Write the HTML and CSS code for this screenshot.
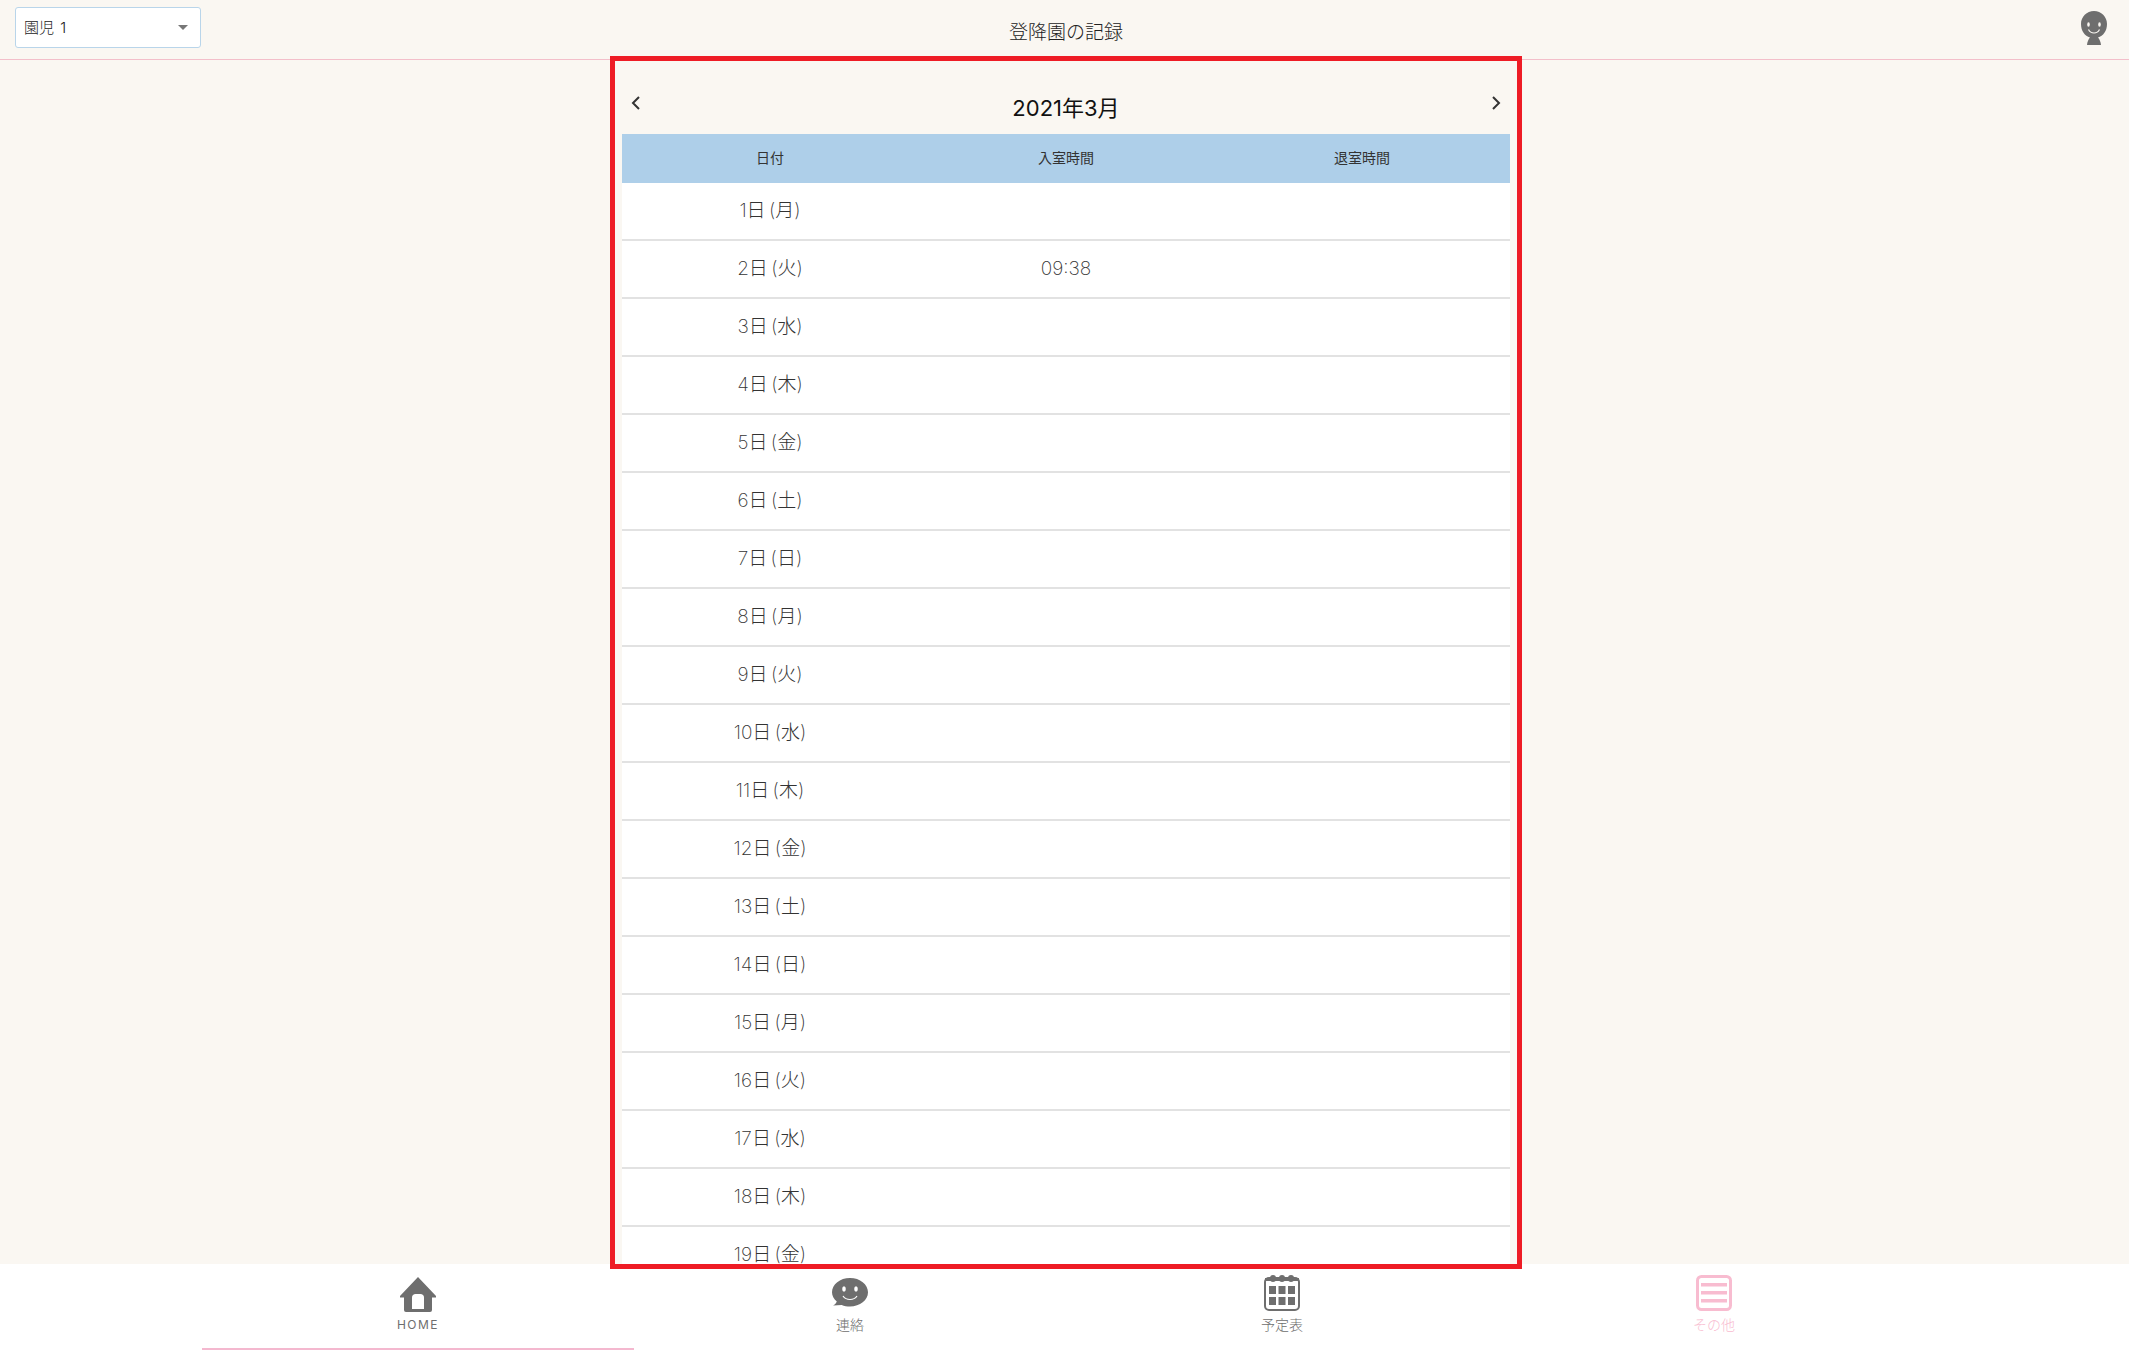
FILE: index.html
```html
<!DOCTYPE html>
<html lang="ja">
<head>
<meta charset="utf-8">
<title>登降園の記録</title>
<link rel="stylesheet" href="styles.css">
</head>
<body>
<header class="topbar">
  <div class="child-select"><span>園児 1</span><i class="caret"></i></div>
  <h1 class="page-title">登降園の記録</h1>
  <svg class="user-icon" viewBox="0 0 26 34" width="26" height="34">
    <path class="fill-gray" d="M6 34c.3-3 1.300-5.500 3-7.500C3.800 24.800 0 20.300 0 13 0 5.800 5.800 0 13 0s13 5.800 13 13c0 7.300-3.800 11.800-9 13.500 1.700 2 2.700 4.500 3 7.500z"/>
    <ellipse class="fill-face" cx="7.500" cy="13.500" rx="1.300" ry="2.300"/>
    <ellipse class="fill-face" cx="18.500" cy="13.500" rx="1.300" ry="2.300"/>
    <path class="smile" d="M7.500 18.500c1.300 2.600 3.300 3.500 5.500 3.500s4.200-.9 5.500-3.500"/>
  </svg>
</header>

<main class="content">
  <section class="panel">
    <div class="month-head">
      <svg class="chev" viewBox="0 0 10 16" width="10" height="16"><path d="M8 2 2 8l6 6"/></svg>
      <h2 class="month-title">2021年3月</h2>
      <svg class="chev" viewBox="0 0 10 16" width="10" height="16"><path d="m2 2 6 6-6 6"/></svg>
    </div>
    <table class="records">
      <thead>
        <tr><th>日付</th><th>入室時間</th><th>退室時間</th></tr>
      </thead>
      <tbody>
        <tr><td>1日 (月)</td><td></td><td></td></tr>
        <tr><td>2日 (火)</td><td>09:38</td><td></td></tr>
        <tr><td>3日 (水)</td><td></td><td></td></tr>
        <tr><td>4日 (木)</td><td></td><td></td></tr>
        <tr><td>5日 (金)</td><td></td><td></td></tr>
        <tr><td>6日 (土)</td><td></td><td></td></tr>
        <tr><td>7日 (日)</td><td></td><td></td></tr>
        <tr><td>8日 (月)</td><td></td><td></td></tr>
        <tr><td>9日 (火)</td><td></td><td></td></tr>
        <tr><td>10日 (水)</td><td></td><td></td></tr>
        <tr><td>11日 (木)</td><td></td><td></td></tr>
        <tr><td>12日 (金)</td><td></td><td></td></tr>
        <tr><td>13日 (土)</td><td></td><td></td></tr>
        <tr><td>14日 (日)</td><td></td><td></td></tr>
        <tr><td>15日 (月)</td><td></td><td></td></tr>
        <tr><td>16日 (火)</td><td></td><td></td></tr>
        <tr><td>17日 (水)</td><td></td><td></td></tr>
        <tr><td>18日 (木)</td><td></td><td></td></tr>
        <tr><td>19日 (金)</td><td></td><td></td></tr>
      </tbody>
    </table>
  </section>
</main>

<nav class="tabbar">
  <a class="tab active">
    <svg viewBox="0 0 36 35" width="36" height="35" class="tab-icon">
      <path class="fill-gray" d="M18 0 36 19v1.500h-4V33a2 2 0 0 1-2 2H6a2 2 0 0 1-2-2V20.500H0V19z"/>
      <path class="fill-white" d="M12 32V20.500c0-2 1.500-3.500 3.500-3.500h5c2 0 3.500 1.500 3.500 3.500V32z"/>
    </svg>
    <span class="tab-label latin">HOME</span>
  </a>
  <a class="tab">
    <svg viewBox="0 0 36 36" width="36" height="36" class="tab-icon">
      <path class="fill-gray" d="M18 0c10 0 18 6.300 18 14.300S28 28.500 18 28.500c-3 0-5.800-.5-8.300-1.500L1 27.500c2-1 3.300-2.500 3.800-4C1.800 21 0 17.800 0 14.300 0 6.300 8 0 18 0z"/>
      <ellipse class="fill-white" cx="12" cy="11" rx="1.800" ry="2.700"/>
      <ellipse class="fill-white" cx="24" cy="11" rx="1.800" ry="2.700"/>
      <path class="smile-white" d="M11 18c1.700 2.500 4.200 3.500 7 3.500s5.300-1 7-3.500"/>
    </svg>
    <span class="tab-label">連絡</span>
  </a>
  <a class="tab tab-raised">
    <svg viewBox="0 0 36 36" width="36" height="36" class="tab-icon">
      <rect class="cal-frame" x="1" y="3" width="34" height="32" rx="4"/>
      <rect class="fill-gray" x="1" y="3" width="34" height="3"/>
      <rect class="fill-gray" x="6" y="0" width="6" height="7" rx="3"/>
      <rect class="fill-gray" x="15" y="0" width="6" height="7" rx="3"/>
      <rect class="fill-gray" x="24" y="0" width="6" height="7" rx="3"/>
      <rect class="fill-gray" x="5" y="11" width="7" height="8"/><rect class="fill-gray" x="14.500" y="11" width="7" height="8"/><rect class="fill-gray" x="24" y="11" width="7" height="8"/>
      <rect class="fill-gray" x="5" y="22" width="7" height="8"/><rect class="fill-gray" x="14.500" y="22" width="7" height="8"/><rect class="fill-gray" x="24" y="22" width="7" height="8"/>
    </svg>
    <span class="tab-label">予定表</span>
  </a>
  <a class="tab tab-pink tab-raised">
    <svg viewBox="0 0 36 36" width="36" height="36" class="tab-icon">
      <rect class="menu-frame" x="1.500" y="1.500" width="33" height="33" rx="4"/>
      <rect class="fill-pink" x="5" y="8" width="26" height="3.500"/>
      <rect class="fill-pink" x="5" y="16" width="26" height="3.500"/>
      <rect class="fill-pink" x="5" y="24" width="26" height="3.500"/>
    </svg>
    <span class="tab-label">その他</span>
  </a>
</nav>

<div class="highlight-frame"></div>
</body>
</html>
```

FILE: styles.css
```css
* { box-sizing: border-box; }

html, body { height: 100%; }

body {
  margin: 0;
  display: flex;
  flex-direction: column;
  overflow: hidden;
  background: #faf7f2;
  color: #333;
  font-family: "Inter", "Noto Sans CJK JP", sans-serif;
  font-weight: 300;
}

.topbar {
  flex: none;
  height: 60px;
  position: relative;
  display: flex;
  align-items: flex-start;
  justify-content: space-between;
  padding: 7px 22px 0 15px;
  border-bottom: 1px solid #f3bfca;
}

.child-select {
  width: 186px;
  height: 41px;
  display: flex;
  align-items: center;
  justify-content: space-between;
  padding: 0 12px 3px 8px;
  background: #fff;
  border: 1px solid #b9d5ea;
  border-radius: 3px;
  font-size: 15px;
  word-spacing: 2px;
  color: #222;
}

.caret {
  width: 0;
  height: 0;
  margin-top: 3px;
  border-left: 5px solid transparent;
  border-right: 5px solid transparent;
  border-top: 5px solid #777;
}

.page-title {
  position: absolute;
  left: 0;
  right: 0;
  top: 20px;
  margin: 0;
  padding-left: 3px;
  text-align: center;
  font-size: 19px;
  line-height: 26px;
  font-weight: 300;
  color: #222;
}

.user-icon { margin-top: 4px; }

.fill-gray { fill: #6e6e6e; }
.fill-white { fill: #fff; }
.fill-face { fill: #faf7f2; }
.fill-pink { fill: #f8bcd0; }

.smile {
  fill: none;
  stroke: #faf7f2;
  stroke-width: 1.2;
}

.smile-white {
  fill: none;
  stroke: #fff;
  stroke-width: 1.2;
}

.cal-frame {
  fill: #fff;
  stroke: #6e6e6e;
  stroke-width: 2;
}

.menu-frame {
  fill: #fff;
  stroke: #f8bcd0;
  stroke-width: 3;
}

.content {
  flex: 1;
  min-height: 0;
  overflow: hidden;
  display: flex;
  justify-content: center;
}

.panel {
  width: 888px;
  margin-left: 3px;
}

.month-head {
  height: 74px;
  display: flex;
  justify-content: space-between;
  align-items: flex-start;
  padding: 35px 9px 0;
}

.chev {
  fill: none;
  stroke: #333;
  stroke-width: 2;
}

.month-title {
  margin: 0;
  font-size: 22px;
  line-height: 26px;
  font-weight: 400;
  color: #111;
}

.records {
  width: 100%;
  table-layout: fixed;
  border-collapse: separate;
  border-spacing: 0;
  background: #fff;
}

.records th {
  height: 49px;
  background: #aecfe9;
  font-size: 14px;
  line-height: 20px;
  font-weight: 400;
  color: #333;
  text-align: center;
  padding: 0 0 2px;
}

.records td {
  height: 58px;
  padding: 0;
  text-align: center;
  font-size: 19px;
  font-weight: 200;
  line-height: 24px;
  word-spacing: -2px;
  color: #333;
  border-bottom: 2px solid #e2e2e2;
}

.tabbar {
  flex: none;
  height: 86px;
  background: #fff;
  display: flex;
  justify-content: center;
  padding-left: 3px;
}

.tab {
  width: 432px;
  display: flex;
  flex-direction: column;
  align-items: center;
  padding-top: 14px;
  color: #6e6e6e;
}

.tab.active {
  padding-top: 13px;
  border-bottom: 2px solid #f4b8cf;
}

.tab-raised { padding-top: 11px; }

.tab-pink { color: #f8bcd0; }

.tab-icon { flex: none; }

.tab-label {
  position: relative;
  top: -1px;
  font-size: 14px;
  line-height: 20px;
  margin-top: 2px;
}

.tab-raised .tab-label { margin-top: 5px; }

.tab.active .tab-label { margin-top: 4px; }

.latin {
  font-size: 12px;
  font-weight: 400;
  letter-spacing: 1.500px;
}

.highlight-frame {
  position: absolute;
  left: 610px;
  top: 56px;
  width: 912px;
  height: 1213px;
  border: 5px solid #ee1c25;
  pointer-events: none;
}
```
